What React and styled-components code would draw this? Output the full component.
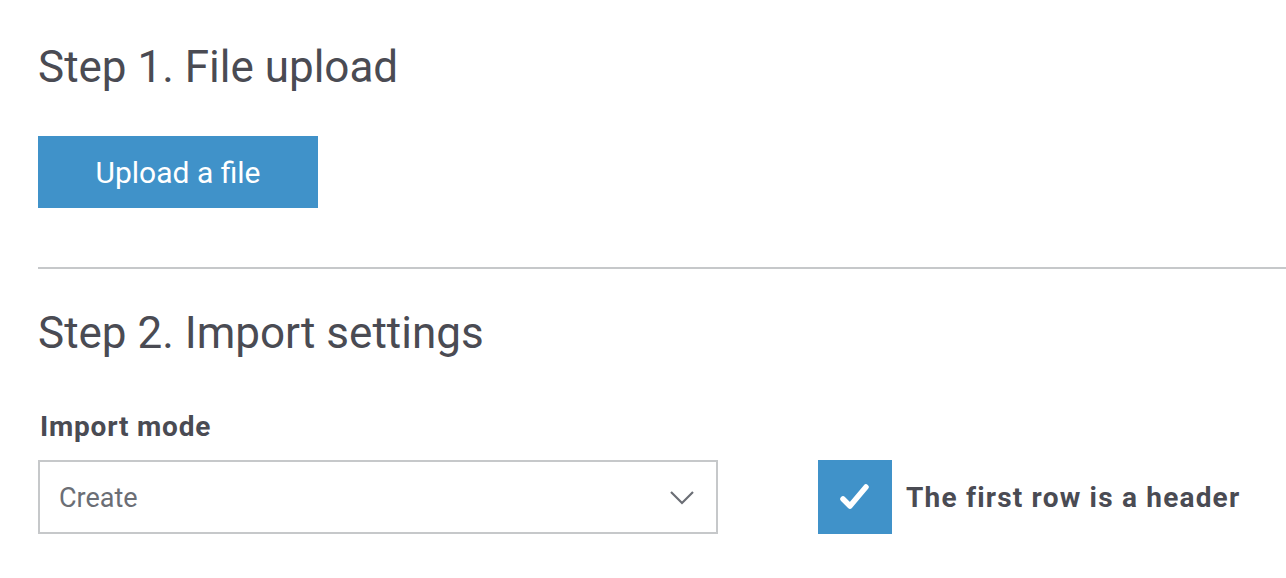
import styled, { createGlobalStyle } from 'styled-components'

const GlobalStyle = createGlobalStyle`
  body {
    margin: 0;
    background: #ffffff;
    font-family: Roboto, "Liberation Sans", sans-serif;
    color: #4a4b53;
  }
`

const Page = styled.div`
  padding: 40px 0 0 38px;
  width: 1248px;
  height: 538px;
  overflow: hidden;
`

const Section = styled.section``

const Title = styled.h2`
  margin: 0;
  font-size: 44px;
  font-weight: 400;
  line-height: 54px;
  color: #4a4b53;
`

const PrimaryButton = styled.button`
  margin-top: 42px;
  width: 280px;
  height: 72px;
  border: none;
  background: #4092c9;
  color: #ffffff;
  font-family: inherit;
  font-size: 30px;
  cursor: pointer;
`

const Divider = styled.hr`
  margin: 59px 0 37px;
  border: none;
  border-top: 2px solid #c6c8ca;
`

const Label = styled.div`
  margin-top: 50px;
  padding-left: 2px;
  font-size: 28px;
  font-weight: 700;
  line-height: 34px;
  letter-spacing: 0.8px;
  color: #4a4b53;
`

const Row = styled.div`
  margin-top: 16px;
  display: flex;
  align-items: center;
`

const Select = styled.div`
  box-sizing: border-box;
  width: 680px;
  height: 74px;
  border: 2px solid #c6c8ca;
  padding: 2px 21px 0 19px;
  display: flex;
  align-items: center;
  justify-content: space-between;
  font-size: 27px;
  color: #6b6e75;
`

const CheckField = styled.label`
  margin-left: 100px;
  display: flex;
  align-items: center;
  gap: 14px;
  font-size: 28px;
  font-weight: 700;
  letter-spacing: 1.2px;
  color: #4a4b53;
`

const Box = styled.span`
  width: 74px;
  height: 74px;
  background: #4092c9;
  display: flex;
  align-items: center;
  justify-content: center;
`

export default function App() {
  return (
    <>
      <GlobalStyle />
      <Page>
        <Section>
          <Title>Step 1. File upload</Title>
          <PrimaryButton>Upload a file</PrimaryButton>
        </Section>
        <Divider />
        <Section>
          <Title>Step 2. Import settings</Title>
          <Label>Import mode</Label>
          <Row>
            <Select>
              <span>Create</span>
              <svg width="26" height="16" viewBox="0 0 26 16" fill="none">
                <path d="M2 2 L13 13 L24 2" stroke="#6b6e75" strokeWidth="2.2" />
              </svg>
            </Select>
            <CheckField>
              <Box>
                <svg width="32" height="28" viewBox="0 0 32 28" fill="none">
                  <path d="M4 16 L11 23 L27 4" stroke="#fff" strokeWidth="5.5" strokeLinecap="round" strokeLinejoin="round" />
                </svg>
              </Box>
              The first row is a header
            </CheckField>
          </Row>
        </Section>
      </Page>
    </>
  )
}
